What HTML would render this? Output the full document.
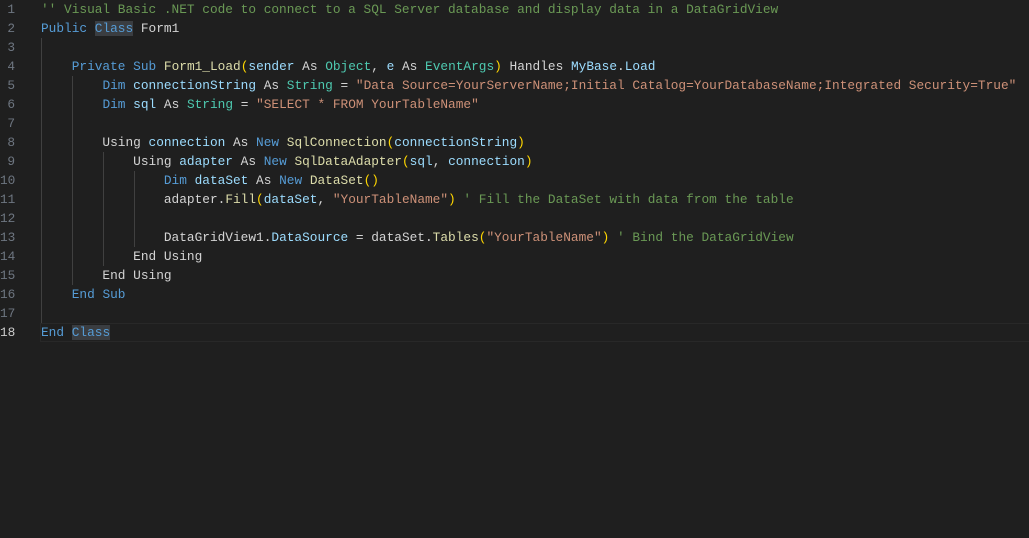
<!DOCTYPE html>
<html><head><meta charset="utf-8"><style>
html,body{margin:0;padding:0;background:#1f1f1f;width:1029px;height:538px;overflow:hidden}
.ed{position:relative;font-family:"Liberation Mono",monospace;font-size:12.8px;color:#d4d4d4}
.ln{position:absolute;left:0;width:15px;text-align:right;color:#6e7681;height:19px;line-height:19px}
.l{position:absolute;left:41px;height:19px;line-height:19px;white-space:pre}
.cur{position:absolute;left:40px;top:323px;width:989px;height:17px;border:1px solid #282828}
.g{position:absolute;width:1px;background:#404040}
.k{color:#569cd6}.v{color:#9cdcfe}.t{color:#4ec9b0}.s{color:#ce9178}.c{color:#6a9955}.f{color:#dcdcaa}.p{color:#ffd700}
.h{background:#3a3d41}
</style></head><body><div class="ed">
<div class="cur"></div>
<div class="g" style="left:41px;top:38px;height:285px"></div>
<div class="g" style="left:72px;top:76px;height:209px"></div>
<div class="g" style="left:103px;top:152px;height:114px"></div>
<div class="g" style="left:134px;top:171px;height:76px"></div>
<div class="ln" style="top:0">1</div><div class="ln" style="top:19px">2</div><div class="ln" style="top:38px">3</div><div class="ln" style="top:57px">4</div><div class="ln" style="top:76px">5</div><div class="ln" style="top:95px">6</div><div class="ln" style="top:114px">7</div><div class="ln" style="top:133px">8</div><div class="ln" style="top:152px">9</div><div class="ln" style="top:171px">10</div><div class="ln" style="top:190px">11</div><div class="ln" style="top:209px">12</div><div class="ln" style="top:228px">13</div><div class="ln" style="top:247px">14</div><div class="ln" style="top:266px">15</div><div class="ln" style="top:285px">16</div><div class="ln" style="top:304px">17</div><div class="ln" style="top:323px;color:#cccccc">18</div>
<div class="l" style="top:0"><span class="c">'' Visual Basic .NET code to connect to a SQL Server database and display data in a DataGridView</span></div>
<div class="l" style="top:19px"><span class="k">Public</span> <span class="k h">Class</span> Form1</div>
<div class="l" style="top:57px">    <span class="k">Private</span> <span class="k">Sub</span> <span class="f">Form1_Load</span><span class="p">(</span><span class="v">sender</span> As <span class="t">Object</span>, <span class="v">e</span> As <span class="t">EventArgs</span><span class="p">)</span> Handles <span class="v">MyBase</span>.<span class="v">Load</span></div>
<div class="l" style="top:76px">        <span class="k">Dim</span> <span class="v">connectionString</span> As <span class="t">String</span> = <span class="s">"Data Source=YourServerName;Initial Catalog=YourDatabaseName;Integrated Security=True"</span></div>
<div class="l" style="top:95px">        <span class="k">Dim</span> <span class="v">sql</span> As <span class="t">String</span> = <span class="s">"SELECT * FROM YourTableName"</span></div>
<div class="l" style="top:133px">        Using <span class="v">connection</span> As <span class="k">New</span> <span class="f">SqlConnection</span><span class="p">(</span><span class="v">connectionString</span><span class="p">)</span></div>
<div class="l" style="top:152px">            Using <span class="v">adapter</span> As <span class="k">New</span> <span class="f">SqlDataAdapter</span><span class="p">(</span><span class="v">sql</span>, <span class="v">connection</span><span class="p">)</span></div>
<div class="l" style="top:171px">                <span class="k">Dim</span> <span class="v">dataSet</span> As <span class="k">New</span> <span class="f">DataSet</span><span class="p">()</span></div>
<div class="l" style="top:190px">                adapter.<span class="f">Fill</span><span class="p">(</span><span class="v">dataSet</span>, <span class="s">"YourTableName"</span><span class="p">)</span> <span class="c">' Fill the DataSet with data from the table</span></div>
<div class="l" style="top:228px">                DataGridView1.<span class="v">DataSource</span> = dataSet.<span class="f">Tables</span><span class="p">(</span><span class="s">"YourTableName"</span><span class="p">)</span> <span class="c">' Bind the DataGridView</span></div>
<div class="l" style="top:247px">            End Using</div>
<div class="l" style="top:266px">        End Using</div>
<div class="l" style="top:285px">    <span class="k">End</span> <span class="k">Sub</span></div>
<div class="l" style="top:323px"><span class="k">End</span> <span class="k h">Class</span></div>
</div></body></html>
